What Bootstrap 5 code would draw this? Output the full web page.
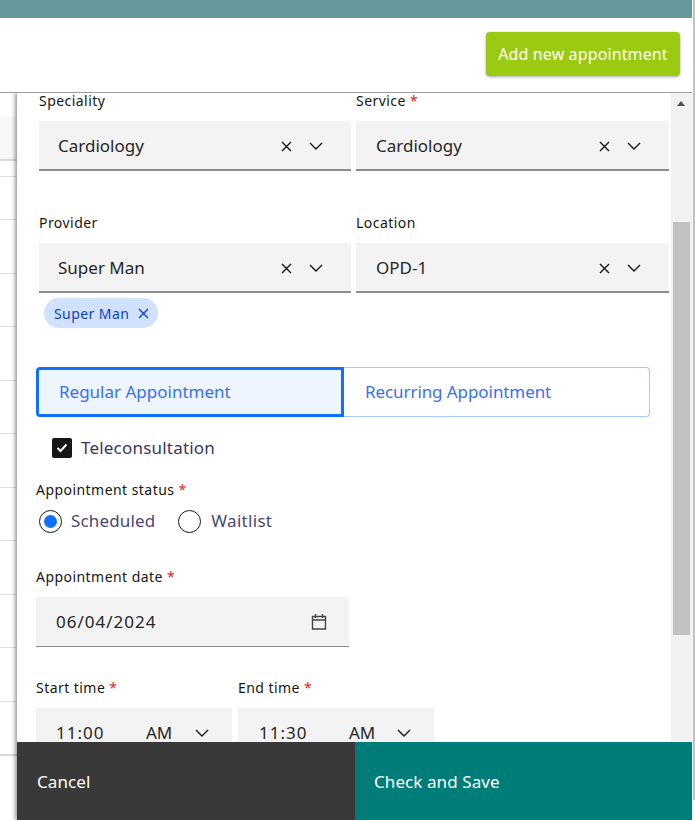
<!DOCTYPE html>
<html lang="en">
<head>
<meta charset="utf-8">
<title>Add new appointment</title>
<link href="https://cdn.jsdelivr.net/npm/bootstrap@5.3.0/dist/css/bootstrap.min.css" rel="stylesheet">
<style>
html,body{height:100%;overflow:hidden}
body{font-family:"Noto Sans","Open Sans",sans-serif;color:#161616;background:#fff;font-size:14px}
.shell{height:820px;width:695px;position:relative}
.edgeline{position:absolute;top:0;right:0;width:2px;height:800px;background:#c4c4c4}
.topstrip{height:18px;width:692px;background:#66999b}
.headbar{height:75px;width:692px;border-bottom:1px solid #a0a0a0;padding:14px 12px 0 0}
.addbtn{width:194px;height:44px;background:#9acb12;color:#fff;border:0;border-radius:4px;font-size:16px;letter-spacing:.12px;box-shadow:0 1px 3px rgba(0,0,0,.35);padding:0;line-height:40px}
.stage{height:727px;position:relative;overflow:hidden}
.backdrop{width:17px;flex:none;background:#fff}
.bgrow{border-bottom:1px solid #e0e0e0}
.bg-top{height:24px;border:0}
.bg-a{height:44px;background:#f7f7f7;border-bottom:2px solid #d8d8d8}
.bg-d{height:16px}
.bg-b{height:43px}
.bg-c{height:53.5px}
.bg-e{height:54px;border-bottom:2px solid #d8d8d8}
.panel{width:675px;flex:none;position:relative;box-shadow:-2px 0 4px rgba(0,0,0,.4);background:#fff}
.scroller{height:649px;overflow:hidden;position:relative}
.formarea{padding:0 0 0 19px;width:656px}
.lbl{font-size:14px;line-height:18px;color:#161616;letter-spacing:.45px;display:block;margin:0}
.fieldpair .lbl{line-height:16px}
.req{color:#da1e28}
.fieldpair{display:grid;grid-template-columns:312px 313px;column-gap:5px;margin-left:3px}
.rowgap{margin-top:44px}
.sel{height:50px;background:#f3f3f3;border-bottom:2px solid #8d8d8d;display:flex;align-items:center;padding:2px 0 0 19px;font-size:17px;margin-top:12px;color:#262626}
.sel-r{padding-left:20px}
.sel .val{flex:1}
.ico{display:block;flex:none}
.ctl-x{margin-right:17px}
.ctl-c{margin-right:28px}
.chip{display:inline-flex;align-items:center;height:30px;border-radius:15px;background:#d0e2ff;color:#0f3fc4;font-size:14px;padding:0 9px 0 10px;margin:5px 0 0 5px;letter-spacing:.42px}
.chip svg{margin-left:9px}
.tabs{display:flex;width:614px;height:50px;margin-top:39px}
.tabitem{display:flex;align-items:center;font-size:17px;color:#3a6ff0;background:#fff}
.tab-on{width:308px;background:#edf5ff;border:3px solid #0f6fff;border-radius:4px 0 0 4px;padding-left:20px}
.tab-off{flex:1;border:1px solid #a6c8ff;border-left:0;border-radius:0 4px 4px 0;padding-left:21px;letter-spacing:-.08px}
.cbline{display:flex;align-items:center;margin:20px 0 0 16px;height:22px;font-size:17px;color:#3b3560;letter-spacing:.2px}
.cbox{width:20px;height:20px;background:#161616;border-radius:2px;margin-right:9px;display:flex;align-items:center;justify-content:center}
.statuslabel{margin-top:22px}
.radios{display:flex;align-items:center;height:26px;margin:9px 0 0 3px;font-size:17px;color:#4a4770;letter-spacing:.15px}
.rad{width:23px;height:23px;border:1.5px solid #161616;border-radius:50%;margin-right:9px;display:flex;align-items:center;justify-content:center;flex:none}
.rad i{display:block;width:13px;height:13px;background:#0f6fff;border-radius:50%}
.radtxt{margin-right:23px}
.radtxt-b{letter-spacing:.3px;margin-left:1px}
.daterow{margin-top:34px}
.datebox{width:313px;height:50px;background:#f3f3f3;border-bottom:1px solid #8d8d8d;display:flex;align-items:center;justify-content:space-between;padding:0 22px 0 20px;font-size:17px;margin-top:11px;color:#262626;letter-spacing:1px}
.times{display:flex;gap:6px;margin-top:32px}
.timecol{width:196px}
.timebox{height:50px;background:#f3f3f3;display:flex;align-items:center;padding-left:20px;margin-top:11px;font-size:17px;color:#262626;letter-spacing:1px}
.timebox-b{padding-left:21px}
.timebox .tv{width:90px}
.timebox .ap{width:49px;letter-spacing:0}
.timebox-b .ap{width:48px}
.vbar{position:absolute;top:0;right:0;width:21px;height:649px;background:#f1f1f1}
.vthumb{position:absolute;left:2px;top:129px;width:17px;height:413px;background:#c1c1c1}
.varrow{position:absolute;left:6px;top:8px;width:0;height:0;border-left:4px solid transparent;border-right:4px solid transparent;border-bottom:5px solid #505050}
.footerbar{height:78px;width:675px;display:flex;font-size:17px;color:#fff;letter-spacing:.08px}
.ftcancel{width:338px;background:#393939;display:flex;align-items:center;padding:2px 0 0 20px}
.ftsave{flex:1;background:#007d79;display:flex;align-items:center;padding:2px 0 0 19px}
</style>
</head>
<body>
<div class="shell">
  <div class="edgeline"></div>
  <div class="topstrip"></div>
  <div class="headbar d-flex justify-content-end">
    <button class="btn addbtn" type="button">Add new appointment</button>
  </div>
  <div class="stage d-flex">
    <div class="backdrop">
      <div class="bgrow bg-top"></div>
      <div class="bgrow bg-a"></div>
      <div class="bgrow bg-d"></div>
      <div class="bgrow bg-b"></div>
      <div class="bgrow bg-c"></div>
      <div class="bgrow bg-c"></div>
      <div class="bgrow bg-c"></div>
      <div class="bgrow bg-c"></div>
      <div class="bgrow bg-c"></div>
      <div class="bgrow bg-c"></div>
      <div class="bgrow bg-c"></div>
      <div class="bgrow bg-c"></div>
      <div class="bgrow bg-c"></div>
      <div class="bgrow bg-e"></div>
    </div>
    <div class="panel">
      <div class="scroller">
        <div class="formarea">
          <div class="fieldpair">
            <div>
              <span class="lbl">Speciality</span>
              <div class="sel"><span class="val">Cardiology</span>
                <svg class="ico ctl-x" width="11" height="11" viewBox="0 0 11 11"><path d="M1 1l9 9M10 1l-9 9" stroke="#161616" stroke-width="1.4" fill="none"/></svg>
                <svg class="ico ctl-c" width="14" height="8" viewBox="0 0 14 8"><path d="M1 1l6 6 6-6" stroke="#161616" stroke-width="1.4" fill="none"/></svg>
              </div>
            </div>
            <div>
              <span class="lbl">Service <span class="req">*</span></span>
              <div class="sel sel-r"><span class="val">Cardiology</span>
                <svg class="ico ctl-x" width="11" height="11" viewBox="0 0 11 11"><path d="M1 1l9 9M10 1l-9 9" stroke="#161616" stroke-width="1.4" fill="none"/></svg>
                <svg class="ico ctl-c" width="14" height="8" viewBox="0 0 14 8"><path d="M1 1l6 6 6-6" stroke="#161616" stroke-width="1.4" fill="none"/></svg>
              </div>
            </div>
          </div>
          <div class="fieldpair rowgap">
            <div>
              <span class="lbl">Provider</span>
              <div class="sel"><span class="val">Super Man</span>
                <svg class="ico ctl-x" width="11" height="11" viewBox="0 0 11 11"><path d="M1 1l9 9M10 1l-9 9" stroke="#161616" stroke-width="1.4" fill="none"/></svg>
                <svg class="ico ctl-c" width="14" height="8" viewBox="0 0 14 8"><path d="M1 1l6 6 6-6" stroke="#161616" stroke-width="1.4" fill="none"/></svg>
              </div>
              <span class="chip">Super Man<svg width="11" height="11" viewBox="0 0 11 11"><path d="M1 1l9 9M10 1l-9 9" stroke="#0f3fc4" stroke-width="1.4" fill="none"/></svg></span>
            </div>
            <div>
              <span class="lbl">Location</span>
              <div class="sel sel-r"><span class="val">OPD-1</span>
                <svg class="ico ctl-x" width="11" height="11" viewBox="0 0 11 11"><path d="M1 1l9 9M10 1l-9 9" stroke="#161616" stroke-width="1.4" fill="none"/></svg>
                <svg class="ico ctl-c" width="14" height="8" viewBox="0 0 14 8"><path d="M1 1l6 6 6-6" stroke="#161616" stroke-width="1.4" fill="none"/></svg>
              </div>
            </div>
          </div>
          <div class="tabs">
            <div class="tabitem tab-on">Regular Appointment</div>
            <div class="tabitem tab-off">Recurring Appointment</div>
          </div>
          <div class="cbline">
            <span class="cbox"><svg width="12" height="10" viewBox="0 0 12 10"><path d="M1.5 5l3 3 6-6.5" stroke="#fff" stroke-width="2" fill="none"/></svg></span>Teleconsultation
          </div>
          <span class="lbl statuslabel">Appointment status <span class="req">*</span></span>
          <div class="radios">
            <span class="rad"><i></i></span><span class="radtxt">Scheduled</span>
            <span class="rad"></span><span class="radtxt-b">Waitlist</span>
          </div>
          <span class="lbl daterow">Appointment date <span class="req">*</span></span>
          <div class="datebox">06/04/2024
            <svg class="ico" width="16" height="17" viewBox="0 0 16 17"><path d="M1.5 3.5h13v12.500h-13zM1.500 7h13M4.500 1v4M11.500 1v4" stroke="#444" stroke-width="1.400" fill="none"/></svg>
          </div>
          <div class="times">
            <div class="timecol">
              <span class="lbl">Start time <span class="req">*</span></span>
              <div class="timebox"><span class="tv">11:00</span><span class="ap">AM</span>
                <svg class="ico" width="14" height="8" viewBox="0 0 14 8"><path d="M1 1l6 6 6-6" stroke="#161616" stroke-width="1.400" fill="none"/></svg>
              </div>
            </div>
            <div class="timecol">
              <span class="lbl">End time <span class="req">*</span></span>
              <div class="timebox timebox-b"><span class="tv">11:30</span><span class="ap">AM</span>
                <svg class="ico" width="14" height="8" viewBox="0 0 14 8"><path d="M1 1l6 6 6-6" stroke="#161616" stroke-width="1.400" fill="none"/></svg>
              </div>
            </div>
          </div>
        </div>
        <div class="vbar"><div class="varrow"></div><div class="vthumb"></div></div>
      </div>
      <div class="footerbar">
        <div class="ftcancel">Cancel</div>
        <div class="ftsave">Check and Save</div>
      </div>
    </div>
  </div>
</div>
<script src="https://cdn.jsdelivr.net/npm/bootstrap@5.3.0/dist/js/bootstrap.bundle.min.js"></script>
</body>
</html>
